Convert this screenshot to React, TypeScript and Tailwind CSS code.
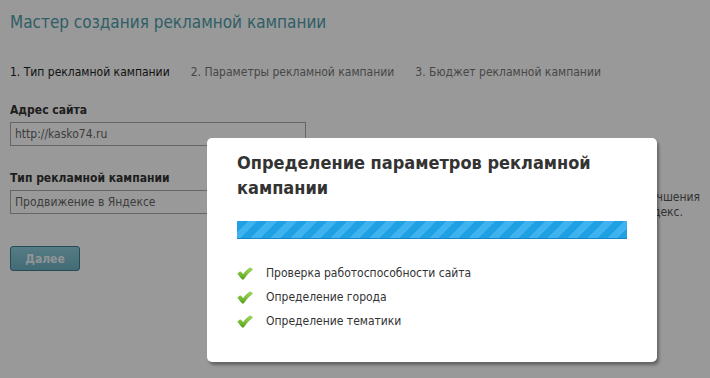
import React from 'react'

const FONT = '"DejaVu Sans Condensed", "DejaVu Sans", Verdana, sans-serif'

const steps = ['1. Тип рекламной кампании', '2. Параметры рекламной кампании', '3. Бюджет рекламной кампании']

const checks = ['Проверка работоспособности сайта', 'Определение города', 'Определение тематики']

function Check() {
  return (
    <svg width="16" height="13" viewBox="0 0 16 13" className="shrink-0">
      <defs>
        <linearGradient id="chk" x1="0" y1="0" x2="0" y2="1">
          <stop offset="0" stopColor="#a6e04a" />
          <stop offset="1" stopColor="#4fa319" />
        </linearGradient>
      </defs>
      <path
        d="M0.8 6.8 Q2 5 3.6 4.8 L6.2 7.4 Q9 3.4 12.8 0.9 Q14.6 1.2 15.4 2.6 Q10 6.6 6.6 12.2 Q5.4 12.6 4.6 11.8 Z"
        fill="url(#chk)"
        stroke="#5c9a2a"
        strokeWidth="0.5"
        strokeLinejoin="round"
      />
    </svg>
  )
}

export default function App() {
  return (
    <div className="relative h-[378px] w-[710px] overflow-hidden bg-white" style={{ fontFamily: FONT }}>
      <div className="px-[10px] pt-[10px]">
        <h1 className="text-[17px] leading-[24px] text-[#4e9eab]">Мастер создания рекламной кампании</h1>
        <div className="mt-[30px] flex gap-[21px] text-[12px] leading-[16px] text-[#777]">
          {steps.map((s, i) => (
            <span key={s} className={i === 0 ? 'text-[#222]' : ''}>
              {s}
            </span>
          ))}
        </div>
        <div className="mt-[22px] text-[12px] font-bold leading-[16px] text-[#333]">Адрес сайта</div>
        <div className="mt-[4px] flex h-[24px] w-[296px] items-center border border-[#aaa] px-[4px] text-[12px] text-[#666]">
          http://kasko74.ru
        </div>
        <div className="mt-[24px] text-[12px] font-bold leading-[16px] text-[#333]">Тип рекламной кампании</div>
        <div className="mt-[4px] flex items-start">
          <div className="flex h-[24px] w-[296px] items-center border border-[#aaa] px-[4px] text-[12px] text-[#666]">
            Продвижение в Яндексе
          </div>
          <div className="ml-auto flex flex-col items-end text-[12px] leading-[15px] text-[#555]">
            <span>для улучшения</span>
            <span className="mr-[17px]">в Яндекс.</span>
          </div>
        </div>
        <button className="mt-[26px] h-[25px] w-[70px] rounded-[3px] border border-[#3f7d8c] bg-gradient-to-b from-[#8fd0df] to-[#6fb3c4] text-[12px] font-bold text-[#eef6f8]">
          Далее
        </button>
      </div>

      <div className="absolute inset-0 bg-black/40" />

      <div className="absolute left-[207px] top-[138px] h-[224px] w-[450px] rounded-[5px] bg-white px-[30px] pt-[12px] shadow-[2px_3px_3px_rgba(0,0,0,0.35)]">
        <h2 className="text-[18px] font-bold leading-[25px] text-[#333]">
          Определение параметров рекламной кампании
        </h2>
        <div className="mt-[21px] h-[18px] w-[390px] border-b border-[#1587c4] bg-[#1ea0e2] bg-[repeating-linear-gradient(-45deg,#1ea0e2_0px,#1ea0e2_7px,#3fb2f0_7px,#3fb2f0_14px)]" />
        <ul className="mt-[26px] flex flex-col gap-[8px] text-[12px] leading-[16px] text-[#333]">
          {checks.map((c) => (
            <li key={c} className="flex items-center gap-[13px]">
              <Check />
              <span>{c}</span>
            </li>
          ))}
        </ul>
      </div>
    </div>
  )
}
